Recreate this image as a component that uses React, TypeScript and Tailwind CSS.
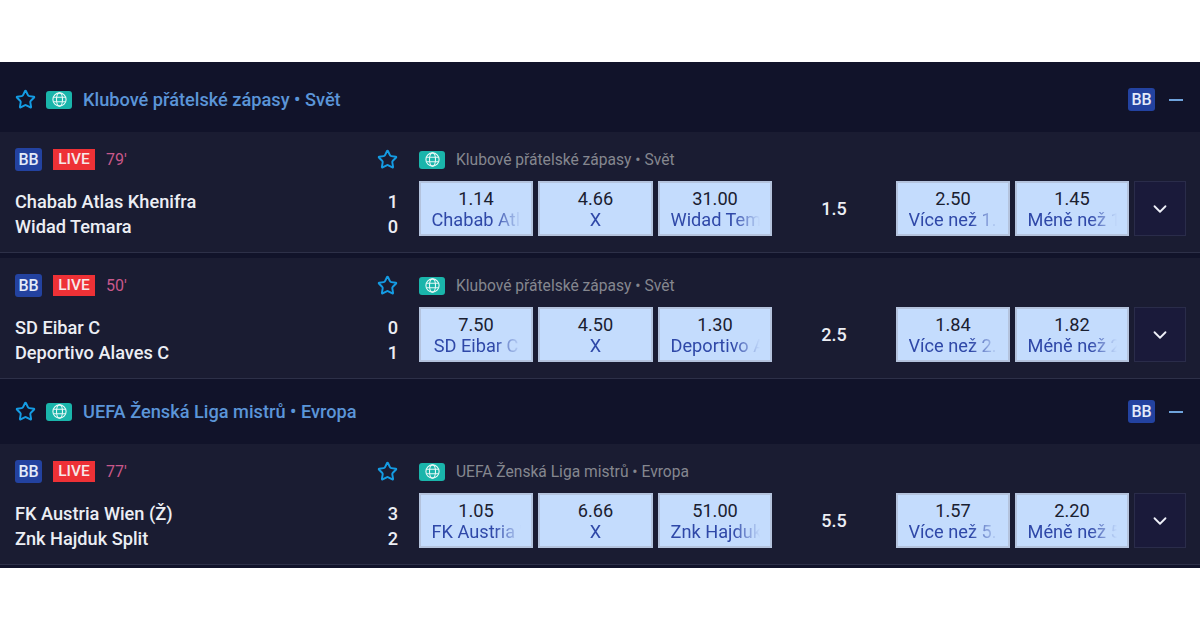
import { ChevronDown, Star } from 'lucide-react';

type Match = {
  minute: string;
  league: string;
  home: string;
  away: string;
  homeScore: number;
  awayScore: number;
  odds: [string, string, string];
  line: string;
  over: string;
  under: string;
};

const clubs = 'Klubové přátelské zápasy • Svět';
const uefa = 'UEFA Ženská Liga mistrů • Evropa';

const firstGroup: Match[] = [
  {
    minute: "79'",
    league: clubs,
    home: 'Chabab Atlas Khenifra',
    away: 'Widad Temara',
    homeScore: 1,
    awayScore: 0,
    odds: ['1.14', '4.66', '31.00'],
    line: '1.5',
    over: '2.50',
    under: '1.45',
  },
  {
    minute: "50'",
    league: clubs,
    home: 'SD Eibar C',
    away: 'Deportivo Alaves C',
    homeScore: 0,
    awayScore: 1,
    odds: ['7.50', '4.50', '1.30'],
    line: '2.5',
    over: '1.84',
    under: '1.82',
  },
];

const secondGroup: Match[] = [
  {
    minute: "77'",
    league: uefa,
    home: 'FK Austria Wien (Ž)',
    away: 'Znk Hajduk Split',
    homeScore: 3,
    awayScore: 2,
    odds: ['1.05', '6.66', '51.00'],
    line: '5.5',
    over: '1.57',
    under: '2.20',
  },
];

const BB = ({ className }: { className: string }) => (
  <span
    className={`flex h-[23px] w-[27px] items-center justify-center rounded-[3px] bg-[#2342a0] text-[16px] font-medium text-[#e4ebfa] ${className}`}
  >
    BB
  </span>
);

const FavStar = () => (
  <Star size={21} strokeWidth={2.25} className="shrink-0 text-[#149ce4]" />
);

const GlobeBadge = () => (
  <span className="flex h-[18px] w-[26px] shrink-0 items-center justify-center rounded-[3px] bg-[#1ab5ab]">
    <svg width="15" height="15" viewBox="0 0 15 15" fill="none" stroke="#e8f8f6" strokeWidth="1.1">
      <circle cx="7.5" cy="7.5" r="6.6" />
      <ellipse cx="7.5" cy="7.5" rx="3" ry="6.6" />
      <path d="M1.4 5.3h12.2M1.4 9.7h12.2" />
    </svg>
  </span>
);

const Odd = ({ value, label, wide }: { value: string; label: string; wide?: boolean }) => (
  <button
    className={`flex h-[55px] flex-col items-center justify-center border-2 border-[#b4c3dd] bg-[#c4dcfd] leading-[21px] ${
      wide ? 'w-[115px]' : 'w-[114px]'
    }`}
  >
    <span className="text-[18.2px] text-[#1a2030]">{value}</span>
    <span className="w-[89px] overflow-hidden whitespace-nowrap text-center text-[18.2px] text-[#2f48a8] [mask-image:linear-gradient(to_right,black_70%,transparent_100%)]">
      {label}
    </span>
  </button>
);

const GroupHeader = ({ title, className }: { title: string; className: string }) => (
  <div className={`flex items-center bg-[#11132a] pl-[15px] pr-[17px] ${className}`}>
    <FavStar />
    <span className="ml-[10px]">
      <GlobeBadge />
    </span>
    <span className="ml-[11px] text-[18.2px] font-medium text-[#5b95d8]">{title}</span>
    <BB className="ml-auto" />
    <span className="ml-[14px] h-[2px] w-[14px] bg-[#6fa3dc]" />
  </div>
);

const MatchRow = ({ match, className }: { match: Match; className: string }) => (
  <div className={`flex h-[121px] border-b border-[#2d3048] bg-[#1a1c32] pl-[15px] pr-[14px] pt-[16px] ${className}`}>
    <div className="flex w-[383px] shrink-0 flex-col">
      <div className="flex h-[23px] items-center">
        <BB className="" />
        <span className="ml-[11px] flex h-[21px] w-[42px] items-center justify-center bg-[#ee3136] text-[15.5px] font-medium text-[#f6e8e8]">
          LIVE
        </span>
        <span className="ml-[11px] text-[16px] text-[#c9588a]">{match.minute}</span>
        <span className="ml-auto">
          <FavStar />
        </span>
      </div>
      <div className="mt-[18px] flex justify-between text-[18.2px] font-medium leading-[25px] text-[#eceef4]">
        <span>{match.home}</span>
        <span>{match.homeScore}</span>
      </div>
      <div className="flex justify-between text-[18.2px] font-medium leading-[25px] text-[#eceef4]">
        <span>{match.away}</span>
        <span>{match.awayScore}</span>
      </div>
    </div>
    <div className="ml-[21px] flex flex-1 flex-col">
      <div className="flex h-[23px] items-center">
        <GlobeBadge />
        <span className="ml-[11px] pt-[2px] text-[15.6px] text-[#85878f]">{match.league}</span>
      </div>
      <div className="mt-[10px] flex items-center">
        <div className="flex gap-[5px]">
          <Odd value={match.odds[0]} label={match.home} />
          <Odd value={match.odds[1]} label="X" wide />
          <Odd value={match.odds[2]} label={match.away} />
        </div>
        <span className="w-[124px] text-center text-[18px] font-medium text-[#eceef4]">{match.line}</span>
        <div className="flex gap-[5px]">
          <Odd value={match.over} label={`Více než ${match.line}`} />
          <Odd value={match.under} label={`Méně než ${match.line}`} />
        </div>
        <button className="ml-[5px] flex h-[55px] w-[52px] items-center justify-center border border-[#2a2c4a] bg-[#1a1a3a]">
          <ChevronDown size={22} strokeWidth={2} className="text-[#eef0f8]" />
        </button>
      </div>
    </div>
  </div>
);

export default function App() {
  return (
    <div className="h-[630px] bg-white font-['Roboto',sans-serif]">
      <div className="h-[62px]" />
      <div className="bg-[#11132a]">
        <GroupHeader title={clubs} className="h-[70px] pt-[5px]" />
        {firstGroup.map((match, i) => (
          <MatchRow key={match.home} match={match} className={i === 0 ? 'mb-[5px]' : ''} />
        ))}
        <GroupHeader title={uefa} className="h-[65px]" />
        {secondGroup.map(match => (
          <MatchRow key={match.home} match={match} className="" />
        ))}
        <div className="h-[3px]" />
      </div>
    </div>
  );
}
